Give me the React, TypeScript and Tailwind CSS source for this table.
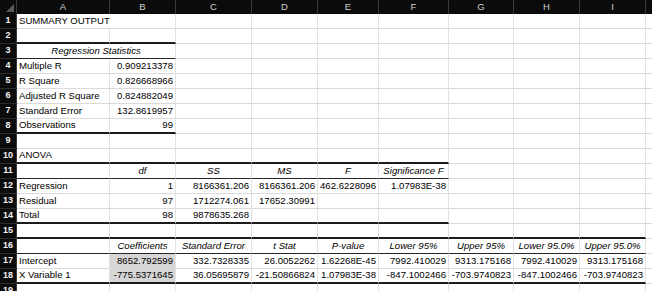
import React from 'react';

type Align = 'l' | 'r' | 'c';
type Line = 'grid' | 'thin' | 'thick';

interface Cell {
  text?: string;
  align?: Align;
  italic?: boolean;
  shade?: boolean;
  span?: number;
}

const COLS = ['A', 'B', 'C', 'D', 'E', 'F', 'G', 'H', 'I', 'J'];

// pixel widths of A..J, written out so tailwind picks them up
const WIDTH = [
  'w-[93px]',
  'w-[66px]',
  'w-[76px]',
  'w-[66px]',
  'w-[61px]',
  'w-[70px]',
  'w-[65px]',
  'w-[66px]',
  'w-[66px]',
  'w-[40px]',
];
const SPAN_AB = 'w-[159px]';

const L = (text: string): Cell => ({ text, align: 'l' });
const R = (text: string): Cell => ({ text, align: 'r' });
const H = (text: string): Cell => ({ text, align: 'c', italic: true });

const rows: { cells: Cell[]; bottom?: Line; upto?: number }[] = [
  // text spills over the empty B1, like excel does
  { cells: [{ text: 'SUMMARY OUTPUT', align: 'l', span: 2 }] },
  { cells: [], bottom: 'thick', upto: 2 },
  { cells: [{ text: 'Regression Statistics', align: 'c', italic: true, span: 2 }], bottom: 'thin', upto: 2 },
  { cells: [L('Multiple R'), R('0.909213378')] },
  { cells: [L('R Square'), R('0.826668966')] },
  { cells: [L('Adjusted R Square'), R('0.824882049')] },
  { cells: [L('Standard Error'), R('132.8619957')] },
  { cells: [L('Observations'), R('99')], bottom: 'thick', upto: 2 },
  { cells: [] },
  { cells: [L('ANOVA')], bottom: 'thick', upto: 6 },
  { cells: [{}, H('df'), H('SS'), H('MS'), H('F'), H('Significance F')], bottom: 'thin', upto: 6 },
  { cells: [L('Regression'), R('1'), R('8166361.206'), R('8166361.206'), R('462.6228096'), R('1.07983E-38')] },
  { cells: [L('Residual'), R('97'), R('1712274.061'), R('17652.30991')] },
  { cells: [L('Total'), R('98'), R('9878635.268')], bottom: 'thick', upto: 6 },
  { cells: [], bottom: 'thick', upto: 9 },
  {
    cells: [{}, H('Coefficients'), H('Standard Error'), H('t Stat'), H('P-value'), H('Lower 95%'), H('Upper 95%'), H('Lower 95.0%'), H('Upper 95.0%')],
    bottom: 'thin',
    upto: 9,
  },
  {
    cells: [L('Intercept'), { text: '8652.792599', align: 'r', shade: true }, R('332.7328335'), R('26.0052262'), R('1.62268E-45'), R('7992.410029'), R('9313.175168'), R('7992.410029'), R('9313.175168')],
  },
  {
    cells: [L('X Variable 1'), { text: '-775.5371645', align: 'r', shade: true }, R('36.05695879'), R('-21.50866824'), R('1.07983E-38'), R('-847.1002466'), R('-703.9740823'), R('-847.1002466'), R('-703.9740823')],
    bottom: 'thick',
    upto: 9,
  },
  { cells: [] },
];

function SheetRow({ n, row }: { n: number; row: (typeof rows)[number] }) {
  const out: React.ReactNode[] = [];
  let col = 0;
  let i = 0;
  while (col < COLS.length) {
    const c = row.cells[i] ?? {};
    const span = c.span ?? 1;
    const inBorder = row.bottom && col < (row.upto ?? 0);
    const border =
      inBorder && row.bottom === 'thick'
        ? 'border-b-2 border-b-[#1b1b1b]'
        : inBorder && row.bottom === 'thin'
        ? 'border-b border-b-[#262626]'
        : 'border-b border-b-[#dadada]';
    const align = c.align === 'r' ? 'justify-end' : c.align === 'c' ? 'justify-center' : 'justify-start';
    out.push(
      <div
        key={col}
        className={`${span === 2 ? SPAN_AB : WIDTH[col]} shrink-0 h-full flex items-center ${align} px-[2px] border-r border-r-[#e2e2e2] ${border} ${
          c.shade ? 'bg-[#d6d6d6]' : 'bg-white'
        } ${c.italic ? 'italic' : ''} whitespace-nowrap overflow-hidden`}
      >
        {c.text}
      </div>
    );
    col += span;
    i += 1;
  }
  return (
    <div className="flex h-[15px]">
      <div className="w-[17px] shrink-0 h-full bg-[#0b0b0b] text-[#f2f2f2] font-bold flex items-center justify-center text-[9px] border-b border-b-[#2c2c2c] border-r border-r-[#3a3a3a]">
        {n}
      </div>
      {out}
    </div>
  );
}

export default function App() {
  return (
    <div
      className="w-[652px] h-[291px] overflow-hidden bg-white text-[9.6px] text-black"
      style={{ fontFamily: '"Liberation Sans", Arial, sans-serif' }}
    >
      <div className="flex h-[14px] bg-[#0b0b0b]">
        <div className="w-[17px] shrink-0 h-full relative border-r border-r-[#3a3a3a]">
          <svg className="absolute right-[2px] bottom-[2px]" width="8" height="8" viewBox="0 0 8 8">
            <polygon points="8,0 8,8 0,8" fill="#5a5a5a" />
          </svg>
        </div>
        {COLS.map((c, i) => (
          <div
            key={c}
            className={`${WIDTH[i]} shrink-0 h-full flex items-center justify-center text-[#d0d0d0] text-[9.5px] border-r border-r-[#3a3a3a]`}
          >
            {c === 'J' ? '' : c}
          </div>
        ))}
      </div>
      {rows.map((r, i) => (
        <SheetRow key={i} n={i + 1} row={r} />
      ))}
    </div>
  );
}
